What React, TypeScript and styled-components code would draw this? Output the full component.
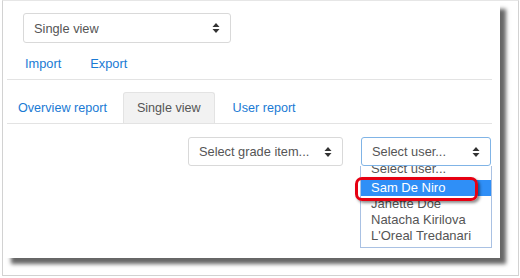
import React from "react";
import styled, { createGlobalStyle } from "styled-components";

const GlobalStyle = createGlobalStyle`
  html, body { margin: 0; padding: 0; background: #fff; }
  body { font-family: "Liberation Sans", Arial, sans-serif; font-size: 12.6px; }
`;

const Frame = styled.div`
  box-sizing: border-box;
  margin-left: 2px;
  width: 517px;
  height: 276px;
  border: 1px solid #d2d2d2;
  border-top-color: #e6e6e6;
`;

const Panel = styled.div`
  box-sizing: border-box;
  width: 497px;
  height: 257px;
  background: #fff;
  padding: 0 8px 0 4px;
  box-shadow: 7px 7px 4px -1px rgba(0, 0, 0, 0.6);
`;

const TopRow = styled.div`
  padding: 12px 0 0 16px;
`;

const SelectBox = styled.div<{ $w: number; $focus?: boolean }>`
  box-sizing: border-box;
  width: ${(p) => p.$w}px;
  height: ${(p) => (p.$focus !== undefined ? 29 : 30)}px;
  border: 1px solid ${(p) => (p.$focus ? "#80b4e6" : "#d9d9d9")};
  border-radius: 3px;
  background: #fff;
  display: flex;
  align-items: center;
  justify-content: space-between;
  padding: 0 10px 0 10px;
  color: #555;
  font-size: 12.8px;
`;

const NavRow = styled.div`
  margin-top: 4px;
  height: 32px;
  display: flex;
  align-items: center;
  gap: 29px;
  padding-left: 18px;
  border-bottom: 1px solid #e3e3e3;
`;

const Link = styled.span`
  color: #1a7ad4;
  font-size: 12.8px;
`;

const Tabs = styled.div`
  margin-top: 12px;
  display: flex;
  align-items: flex-end;
  border-bottom: 1px solid #e3e3e3;
`;

const Tab = styled.div<{ $active?: boolean; $ml: number; $pad: number }>`
  box-sizing: border-box;
  height: 31px;
  margin-left: ${(p) => p.$ml}px;
  padding: 0 ${(p) => p.$pad}px;
  display: flex;
  align-items: center;
  font-size: 12.6px;
  color: ${(p) => (p.$active ? "#555" : "#1a7ad4")};
  background: ${(p) => (p.$active ? "#f2f2f2" : "transparent")};
  border: 1px solid ${(p) => (p.$active ? "#e3e3e3" : "transparent")};
  border-bottom: none;
  border-radius: 3px 3px 0 0;
`;

const FilterRow = styled.div`
  margin-top: 13px;
  display: flex;
  justify-content: flex-end;
  gap: 18px;
  padding-right: 1px;
`;

const UserWrap = styled.div`
  position: relative;
`;

const DropList = styled.div`
  position: absolute;
  top: 29px;
  left: -1px;
  box-sizing: border-box;
  width: 132px;
  height: 82px;
  border: 1px solid #a9c1e3;
  border-top: none;
  background: #fff;
  overflow: hidden;
`;

const ListInner = styled.div`
  margin-top: -2px;
`;

const Item = styled.div<{ $sel?: boolean; $lh?: number }>`
  height: 16px;
  line-height: ${(p) => p.$lh ?? 16}px;
  padding-left: 10px;
  font-size: 13px;
  color: ${(p) => (p.$sel ? "#fff" : "#555")};
  background: ${(p) => (p.$sel ? "#2f8ff7" : "transparent")};
  white-space: nowrap;
`;

const Callout = styled.div`
  position: absolute;
  left: -6px;
  top: 40px;
  box-sizing: border-box;
  width: 123px;
  height: 24px;
  border: 3px solid #e60012;
  border-radius: 7px;
  box-shadow: 2px 2px 3px rgba(0, 0, 0, 0.45);
  pointer-events: none;
`;

const Arrows = () => (
  <svg width="8" height="12" viewBox="0 0 8 12">
    <path d="M4 1 L7.5 5 L0.5 5 Z" fill="#333" />
    <path d="M4 11 L7.5 7 L0.5 7 Z" fill="#333" />
  </svg>
);

export default function App() {
  return (
    <>
      <GlobalStyle />
      <Frame>
        <Panel>
          <TopRow>
            <SelectBox $w={208}>
              <span>Single view</span>
              <Arrows />
            </SelectBox>
          </TopRow>
          <NavRow>
            <Link>Import</Link>
            <Link>Export</Link>
          </NavRow>
          <Tabs>
            <Tab $ml={0} $pad={10}>Overview report</Tab>
            <Tab $ml={5} $pad={13} $active>Single view</Tab>
            <Tab $ml={4} $pad={13}>User report</Tab>
          </Tabs>
          <FilterRow>
            <SelectBox $w={155} $focus={false}>
              <span>Select grade item...</span>
              <Arrows />
            </SelectBox>
            <UserWrap>
              <SelectBox $w={130} $focus>
                <span>Select user...</span>
                <Arrows />
              </SelectBox>
              <DropList>
                <ListInner>
                  <Item $lh={10}>Select user...</Item>
                  <Item $sel>Sam De Niro</Item>
                  <Item>Janette Doe</Item>
                  <Item>Natacha Kirilova</Item>
                  <Item>L'Oreal Tredanari</Item>
                </ListInner>
              </DropList>
              <Callout />
            </UserWrap>
          </FilterRow>
        </Panel>
      </Frame>
    </>
  );
}
